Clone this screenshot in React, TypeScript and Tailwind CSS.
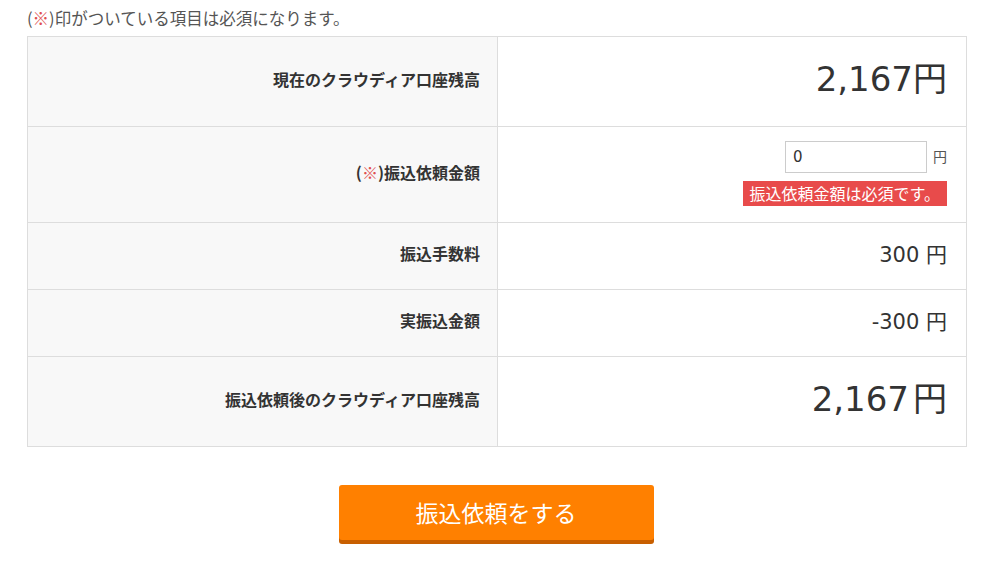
export default function App() {
  const font = { fontFamily: '"Noto Sans CJK JP", "Noto Sans", sans-serif' };
  const num = { fontFamily: '"DejaVu Sans", "Noto Sans CJK JP", sans-serif' };

  return (
    <div className="w-[992px] h-[568px] bg-white text-[#333]" style={font}>
      <div className="px-[27px] pt-[7px]">
        <p className="text-[16.5px] leading-[22px] text-[#555] h-[29px]">
          (<span className="text-[#e05050]">※</span>)印がついている項目は必須になります。
        </p>

        <table className="w-[940px] border-collapse border border-[#dddddd] table-fixed">
          <colgroup>
            <col className="w-[470px]" />
            <col />
          </colgroup>
          <tbody>
            <tr className="h-[90px]">
              <th className="bg-[#f8f8f8] border border-[#dddddd] text-right pr-[17px] pb-[6px] text-[16px] font-bold">
                現在のクラウディア口座残高
              </th>
              <td className="border border-[#dddddd] text-right pr-[19px] pb-[6px] text-[34px] leading-none" style={num}>
                2,167円
              </td>
            </tr>
            <tr className="h-[96px]">
              <th className="bg-[#f8f8f8] border border-[#dddddd] text-right pr-[17px] pb-[6px] text-[16px] font-bold">
                (<span className="text-[#e05050]">※</span>)振込依頼金額
              </th>
              <td className="border border-[#dddddd] pr-[19px] pb-[3px]">
                <div className="flex flex-col items-end gap-[8px]">
                  <div className="flex items-center gap-[6px]">
                    <input
                      defaultValue="0"
                      className="w-[142px] h-[32px] border border-[#cccccc] px-[7px] text-[15px] text-[#333] outline-none"
                      style={num}
                    />
                    <span className="text-[14px] text-[#555]">円</span>
                  </div>
                  <span className="bg-[#e84b4b] text-white text-[16px] leading-[25px] px-[7px]">
                    振込依頼金額は必須です。
                  </span>
                </div>
              </td>
            </tr>
            <tr className="h-[67px]">
              <th className="bg-[#f8f8f8] border border-[#dddddd] text-right pr-[17px] pb-[6px] text-[16px] font-bold">
                振込手数料
              </th>
              <td className="border border-[#dddddd] text-right pr-[19px] text-[21px]" style={num}>
                300 円
              </td>
            </tr>
            <tr className="h-[67px]">
              <th className="bg-[#f8f8f8] border border-[#dddddd] text-right pr-[17px] pb-[6px] text-[16px] font-bold">
                実振込金額
              </th>
              <td className="border border-[#dddddd] text-right pr-[19px] text-[21px]" style={num}>
                -300 円
              </td>
            </tr>
            <tr className="h-[90px]">
              <th className="bg-[#f8f8f8] border border-[#dddddd] text-right pr-[17px] pb-[6px] text-[16px] font-bold">
                振込依頼後のクラウディア口座残高
              </th>
              <td className="border border-[#dddddd] text-right pr-[19px] pb-[6px] text-[34px] leading-none" style={num}>
                2,167<span className="ml-[4px]">円</span>
              </td>
            </tr>
          </tbody>
        </table>

        <div className="flex justify-center mt-[38px]">
          <button className="w-[315px] h-[55px] bg-[#ff8000] rounded-[3px] shadow-[0_4px_0_#c85f00] text-white text-[23px]">
            振込依頼をする
          </button>
        </div>
      </div>
    </div>
  );
}
